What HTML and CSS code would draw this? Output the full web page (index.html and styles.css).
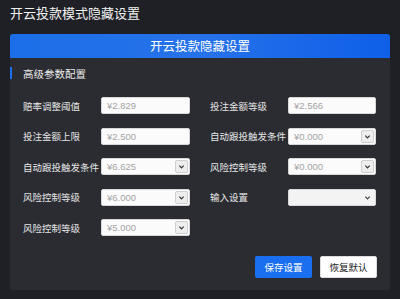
FILE: index.html
```html
<!DOCTYPE html>
<html lang="zh">
<head>
<meta charset="utf-8">
<title>开云投款模式隐藏设置</title>
<link rel="stylesheet" href="styles.css">
</head>
<body>
<div class="page-title">开云投款模式隐藏设置</div>
<div class="panel">
  <div class="panel-head">开云投款隐藏设置</div>
  <div class="section-title">高级参数配置</div>
  <div class="form">
    <div class="field"><span class="label">赔率调整阈值</span><div class="control">¥2.829</div></div>
    <div class="field"><span class="label">投注金额等级</span><div class="control">¥2.566</div></div>
    <div class="field"><span class="label">投注金额上限</span><div class="control">¥2.500</div></div>
    <div class="field"><span class="label">自动跟投触发条件</span><div class="control select">¥0.000<span class="drop"><svg viewBox="0 0 8 8" width="7" height="7"><path d="M1.5 3 L4 5.5 L6.5 3" fill="none" stroke="#333" stroke-width="1.4"/></svg></span></div></div>
    <div class="field"><span class="label">自动跟投触发条件</span><div class="control select">¥6.625<span class="drop"><svg viewBox="0 0 8 8" width="7" height="7"><path d="M1.5 3 L4 5.5 L6.5 3" fill="none" stroke="#333" stroke-width="1.4"/></svg></span></div></div>
    <div class="field"><span class="label">风险控制等级</span><div class="control select">¥0.000<span class="drop"><svg viewBox="0 0 8 8" width="7" height="7"><path d="M1.5 3 L4 5.5 L6.5 3" fill="none" stroke="#333" stroke-width="1.4"/></svg></span></div></div>
    <div class="field"><span class="label">风险控制等级</span><div class="control select">¥6.000<span class="drop"><svg viewBox="0 0 8 8" width="7" height="7"><path d="M1.5 3 L4 5.5 L6.5 3" fill="none" stroke="#333" stroke-width="1.4"/></svg></span></div></div>
    <div class="field"><span class="label">输入设置</span><div class="control select plain"><span class="chev"><svg viewBox="0 0 8 8" width="7" height="7"><path d="M1.5 3 L4 5.5 L6.5 3" fill="none" stroke="#444" stroke-width="1.4"/></svg></span></div></div>
    <div class="field"><span class="label">风险控制等级</span><div class="control select">¥5.000<span class="drop"><svg viewBox="0 0 8 8" width="7" height="7"><path d="M1.5 3 L4 5.5 L6.5 3" fill="none" stroke="#333" stroke-width="1.4"/></svg></span></div></div>
  </div>
  <div class="actions">
    <button class="btn primary">保存设置</button>
    <button class="btn light">恢复默认</button>
  </div>
</div>
</body>
</html>
```
FILE: styles.css
```css
* { box-sizing: border-box; }
html, body { margin: 0; padding: 0; }
body {
  width: 400px;
  height: 299px;
  background: #1e2025;
  font-family: "Noto Sans CJK SC", "Noto Sans", sans-serif;
  color: #ececec;
  overflow: hidden;
}
.page-title {
  height: 34px;
  padding: 4px 0 0 10px;
  font-size: 13px;
  line-height: 18px;
  color: #f2f2f2;
}
.panel {
  margin: 0 10px;
  width: 380px;
  height: 256px;
  background: #2a2c31;
  border-radius: 3px;
  overflow: hidden;
}
.panel-head {
  height: 24px;
  line-height: 24px;
  text-align: center;
  font-size: 12.5px;
  color: #fff;
  background: linear-gradient(90deg, #1c6ee8 0%, #2672ea 50%, #0f5fe8 100%);
}
.section-title {
  position: relative;
  margin-top: 9px;
  padding-left: 13px;
  height: 13px;
  line-height: 13px;
  font-size: 10.5px;
  color: #eaeaea;
}
.section-title::before {
  content: "";
  position: absolute;
  left: 0;
  top: 0;
  width: 2px;
  height: 12px;
  background: #1a6ff0;
}
.form {
  margin-top: 17px;
  padding-left: 13px;
  display: grid;
  grid-template-columns: 167px 166px;
  column-gap: 20px;
  row-gap: 13.5px;
}
.field {
  display: flex;
  align-items: center;
  height: 17px;
}
.label {
  width: 78px;
  flex: none;
  font-size: 9.5px;
  color: #e6e6e6;
  white-space: nowrap;
}
.control {
  position: relative;
  flex: 1;
  height: 17px;
  background: #fbfbfb;
  border: 1px solid #d8d8d8;
  border-radius: 2px;
  padding-left: 5px;
  font-family: "Liberation Sans", Arial, sans-serif;
  font-size: 9.5px;
  line-height: 15px;
  color: #a3a3a3;
}
.control.plain { background: #f3f3f3; }
.drop {
  position: absolute;
  right: 1px;
  top: 1px;
  width: 13px;
  height: 13px;
  background: #eeeeee;
  border: 1px solid #cfcfcf;
  border-radius: 2px;
  display: flex;
  align-items: center;
  justify-content: center;
}
.chev {
  position: absolute;
  right: 4px;
  top: 4px;
  display: flex;
}
.actions {
  display: flex;
  justify-content: flex-end;
  gap: 8px;
  margin-top: 20px;
  padding-right: 13px;
}
.btn {
  width: 57px;
  height: 22px;
  border-radius: 2px;
  font-family: "Noto Sans CJK SC", sans-serif;
  font-size: 9.5px;
  padding: 0;
  border: 1px solid transparent;
}
.btn.primary { background: #1a6ff0; color: #fff; }
.btn.light { background: #fff; color: #222; border-color: #dcdcdc; }
```
